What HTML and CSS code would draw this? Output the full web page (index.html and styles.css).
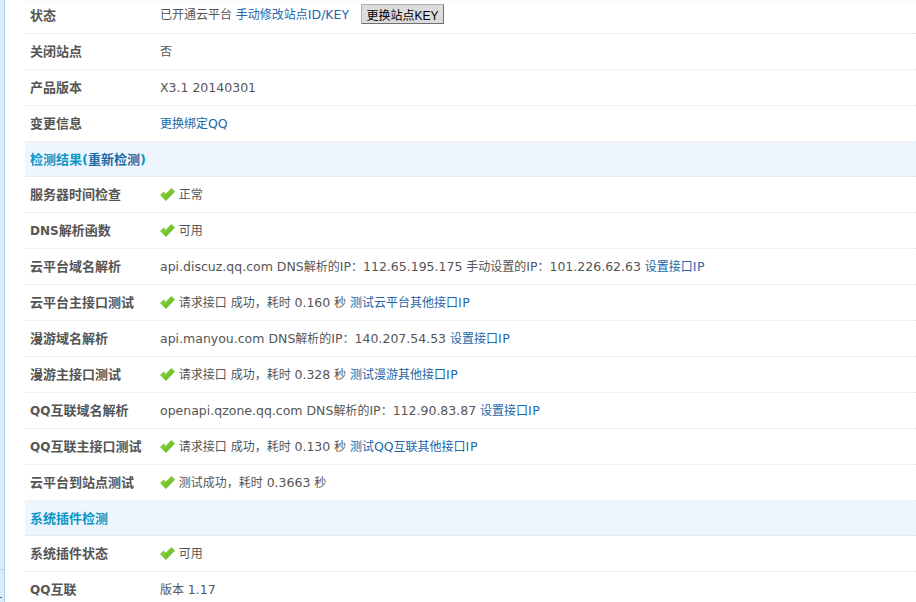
FILE: index.html
```html
<!DOCTYPE html>
<html lang="zh">
<head>
<meta charset="utf-8">
<title>云平台诊断工具</title>
<link rel="stylesheet" href="styles.css">
</head>
<body>
<svg class="defs" aria-hidden="true">
  <defs>
    <linearGradient id="okfill" x1="0" y1="0" x2="1" y2="1">
      <stop offset="0" stop-color="#9be032"/>
      <stop offset="1" stop-color="#4fb51c"/>
    </linearGradient>
    <symbol id="ok" viewBox="0 0 15 13">
      <path d="M.5 7 3.6 4 5.8 6.2 11.3.5 14.6 3.5 5.9 12.6Z" fill="url(#okfill)" stroke="#5aa82a" stroke-width=".6"/>
    </symbol>
  </defs>
</svg>
<div class="page">
  <aside class="rail"></aside>
  <main class="panel">
    <div class="row first"><div class="label">状态</div><div class="value raised">已开通云平台 <a href="#">手动修改站点<span class="en">ID/KEY</span></a><button class="btn" type="button">更换站点KEY</button></div></div>
    <div class="row"><div class="label">关闭站点</div><div class="value">否</div></div>
    <div class="row"><div class="label">产品版本</div><div class="value"><span class="en">X3.1 20140301</span></div></div>
    <div class="row"><div class="label">变更信息</div><div class="value"><a href="#">更换绑定<span class="en">QQ</span></a></div></div>
    <div class="row section"><div class="title">检测结果(<a href="#">重新检测</a>)</div></div>
    <div class="row"><div class="label">服务器时间检查</div><div class="value"><svg class="ok"><use href="#ok"/></svg> 正常</div></div>
    <div class="row"><div class="label"><span class="en-b">DNS</span>解析函数</div><div class="value"><svg class="ok"><use href="#ok"/></svg> 可用</div></div>
    <div class="row"><div class="label">云平台域名解析</div><div class="value"><span class="en">api.discuz.qq.com DNS</span>解析的<span class="en">IP</span>：<span class="en">112.65.195.175</span> 手动设置的<span class="en">IP</span>：<span class="en">101.226.62.63</span> <a href="#">设置接口<span class="en ip">IP</span></a></div></div>
    <div class="row"><div class="label">云平台主接口测试</div><div class="value"><svg class="ok"><use href="#ok"/></svg> 请求接口 成功，耗时 <span class="en">0.160</span> 秒 <a href="#">测试云平台其他接口<span class="en ip">IP</span></a></div></div>
    <div class="row"><div class="label">漫游域名解析</div><div class="value"><span class="en">api.manyou.com DNS</span>解析的<span class="en">IP</span>：<span class="en">140.207.54.53</span> <a href="#">设置接口<span class="en ip">IP</span></a></div></div>
    <div class="row"><div class="label">漫游主接口测试</div><div class="value"><svg class="ok"><use href="#ok"/></svg> 请求接口 成功，耗时 <span class="en">0.328</span> 秒 <a href="#">测试漫游其他接口<span class="en ip">IP</span></a></div></div>
    <div class="row"><div class="label"><span class="en-b">QQ</span>互联域名解析</div><div class="value"><span class="en">openapi.qzone.qq.com DNS</span>解析的<span class="en">IP</span>：<span class="en">112.90.83.87</span> <a href="#">设置接口<span class="en ip">IP</span></a></div></div>
    <div class="row"><div class="label"><span class="en-b">QQ</span>互联主接口测试</div><div class="value"><svg class="ok"><use href="#ok"/></svg> 请求接口 成功，耗时 <span class="en">0.130</span> 秒 <a href="#">测试<span class="en">QQ</span>互联其他接口<span class="en ip">IP</span></a></div></div>
    <div class="row"><div class="label">云平台到站点测试</div><div class="value"><svg class="ok"><use href="#ok"/></svg> 测试成功，耗时 <span class="en">0.3663</span> 秒</div></div>
    <div class="row section"><div class="title">系统插件检测</div></div>
    <div class="row"><div class="label">系统插件状态</div><div class="value"><svg class="ok"><use href="#ok"/></svg> 可用</div></div>
    <div class="row"><div class="label"><span class="en-b">QQ</span>互联</div><div class="value">版本 <span class="en">1.17</span></div></div>
  </main>
</div>
</body>
</html>
```
FILE: styles.css
```css
html, body { margin: 0; height: 100%; overflow: hidden; background: #fff; }
body { font: 12px/18px "DejaVu Sans", "Noto Sans CJK SC", sans-serif; color: #555; }
.defs { position: absolute; width: 0; height: 0; }
.page { display: flex; height: 602px; }
.rail { position: relative; width: 4px; background: #d9ecf7; border-right: 1px solid #a9d3ea; flex: none; }
.rail::before { content: ""; position: absolute; left: 0; top: 569px; width: 4px; height: 1px; background: #c3d4de; }
.rail::after { content: ""; position: absolute; left: 0; top: 597px; width: 2px; height: 1px; background: #2b79b8; }
.panel { margin-left: 20px; flex: 1; min-width: 0; margin-top: -2px; }
.row { box-sizing: border-box; display: flex; align-items: center; height: 36px; border-bottom: 1px dotted #d8e4ee; white-space: nowrap; }
.first { background: linear-gradient(#f4f8fd, #fff 6px); }
.label { width: 130px; padding-top: 1px; padding-left: 5px; font-size: 13px; font-weight: bold; flex: none; }
.raised { margin-bottom: 3px; }
.en { font-size: 12.5px; }
.ip { letter-spacing: .6px; }
.en-b { font-size: 12px; }
.section { height: 35px; background: #eff5fc; }
.title { padding-top: 1px; padding-left: 5px; font-size: 13px; font-weight: bold; color: #0997c9; }
.title a { color: #1b6aa5; }
a { color: #2366a8; text-decoration: none; }
.ok { width: 15px; height: 13px; vertical-align: -2px; }
.btn { font: 12px "Liberation Sans", "Noto Sans CJK SC", sans-serif; box-sizing: border-box; width: 83px; height: 20px; padding: 0; margin-left: 12px; vertical-align: -1px; color: #000; background: #dcdcdc; border: 1px solid #b0b0b0; border-right-color: #707070; border-bottom-color: #707070; border-radius: 0; }
```
